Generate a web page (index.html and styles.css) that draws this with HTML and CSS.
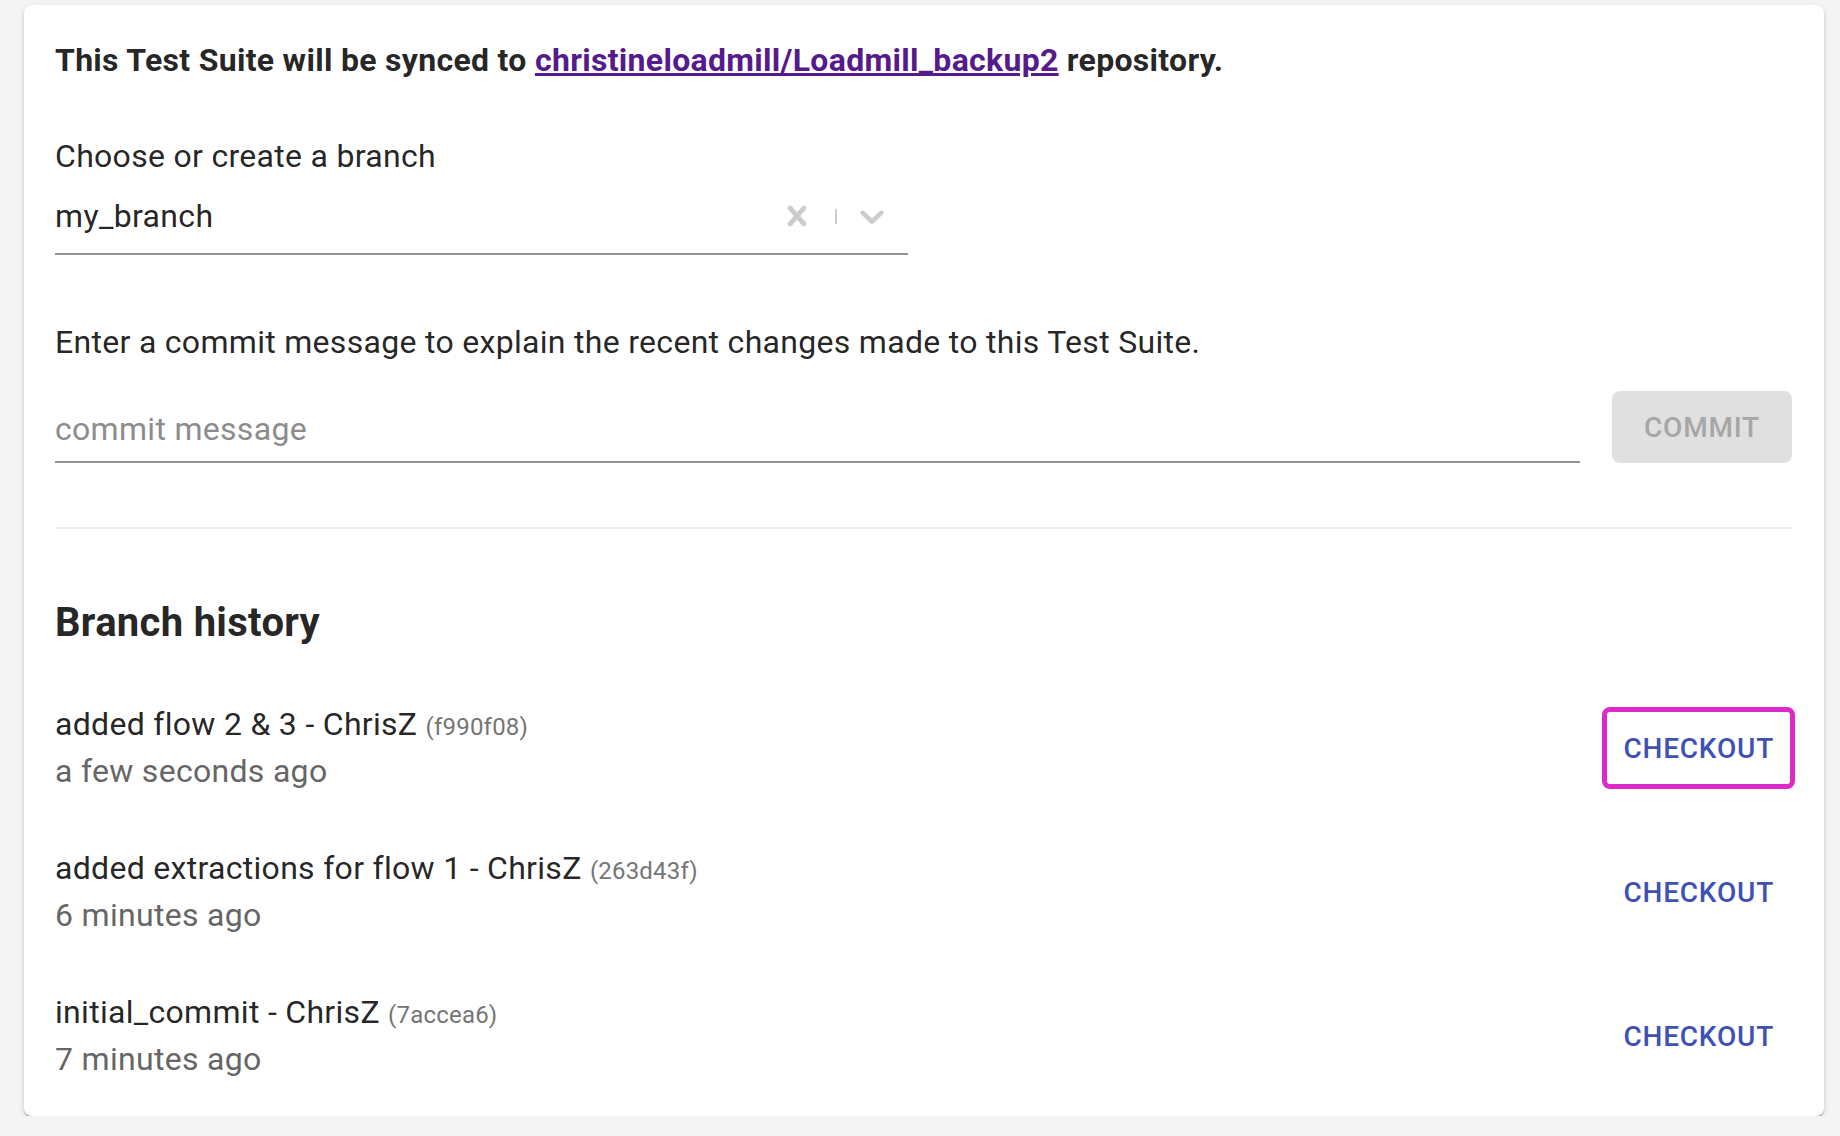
FILE: index.html
```html
<!DOCTYPE html>
<html lang="en">
<head>
<meta charset="utf-8">
<title>Git sync</title>
<link rel="stylesheet" href="styles.css">
</head>
<body>
<main class="card">
  <p class="sync-title">This Test Suite will be synced to <a class="repo-link" href="#">christineloadmill/Loadmill_backup2</a> repository.</p>

  <label class="field-label">Choose or create a branch</label>
  <div class="select">
    <span class="select-value">my_branch</span>
    <span class="select-indicators">
      <svg class="ind-icon" viewBox="0 0 20 20" aria-hidden="true"><path d="M14.348 14.849c-0.469 0.469-1.229 0.469-1.697 0l-2.651-3.030-2.651 3.029c-0.469 0.469-1.229 0.469-1.697 0-0.469-0.469-0.469-1.229 0-1.697l2.758-3.15-2.759-3.152c-0.469-0.469-0.469-1.228 0-1.697s1.228-0.469 1.697 0l2.652 3.031 2.651-3.031c0.469-0.469 1.228-0.469 1.697 0s0.469 1.229 0 1.697l-2.758 3.152 2.758 3.15c0.469 0.469 0.469 1.229 0 1.698z"/></svg>
      <span class="ind-sep"></span>
      <svg class="ind-icon" viewBox="0 0 20 20" aria-hidden="true"><path d="M4.516 7.548c0.436-0.446 1.043-0.481 1.576 0l3.908 3.747 3.908-3.747c0.533-0.481 1.141-0.446 1.574 0 0.436 0.445 0.408 1.197 0 1.615-0.406 0.418-4.695 4.502-4.695 4.502-0.217 0.223-0.502 0.335-0.787 0.335s-0.57-0.112-0.789-0.335c0 0-4.287-4.084-4.695-4.502s-0.436-1.17 0-1.615z"/></svg>
    </span>
  </div>

  <p class="commit-help">Enter a commit message to explain the recent changes made to this Test Suite.</p>
  <div class="commit-row">
    <div class="commit-input"><span class="placeholder">commit message</span></div>
    <button class="btn-commit" disabled>COMMIT</button>
  </div>

  <hr class="divider">

  <h2 class="history-title">Branch history</h2>
  <ul class="history">
    <li class="history-item">
      <div class="history-text">
        <div class="commit-title">added flow 2 &amp; 3 - ChrisZ <span class="hash">(f990f08)</span></div>
        <div class="commit-time">a few seconds ago</div>
      </div>
      <button class="btn-checkout highlighted">CHECKOUT</button>
    </li>
    <li class="history-item">
      <div class="history-text">
        <div class="commit-title">added extractions for flow 1 - ChrisZ <span class="hash">(263d43f)</span></div>
        <div class="commit-time">6 minutes ago</div>
      </div>
      <button class="btn-checkout">CHECKOUT</button>
    </li>
    <li class="history-item">
      <div class="history-text">
        <div class="commit-title">initial_commit - ChrisZ <span class="hash">(7accea6)</span></div>
        <div class="commit-time">7 minutes ago</div>
      </div>
      <button class="btn-checkout">CHECKOUT</button>
    </li>
  </ul>
</main>
</body>
</html>
```

FILE: styles.css
```css
* { box-sizing: border-box; }

html, body {
  margin: 0;
  padding: 0;
  background: #f4f4f4;
}

body {
  font-family: Roboto, "Liberation Sans", Arial, sans-serif;
  color: rgba(0, 0, 0, 0.87);
  padding: 5px 16px 0 24px;
}

.card {
  width: 1800px;
  background: #fff;
  border-radius: 8px;
  box-shadow: 0 4px 2px -2px rgba(0,0,0,0.2), 0 2px 2px 0 rgba(0,0,0,0.14), 0 2px 6px 0 rgba(0,0,0,0.12);
  padding: 35px 32px 8px 31px;
}

.sync-title {
  margin: 0;
  font-size: 32px;
  line-height: 40px;
  font-weight: 700;
  letter-spacing: 0.3px;
}

.repo-link {
  color: #551a8b;
  text-decoration: underline;
  text-decoration-thickness: 3px;
  text-underline-offset: 2px;
}

.field-label {
  display: block;
  margin-top: 56px;
  font-size: 32px;
  line-height: 40px;
  letter-spacing: 0.3px;
}

.select {
  margin-top: 20px;
  width: 853px;
  display: flex;
  align-items: center;
  padding-bottom: 17px;
  border-bottom: 2px solid #939393;
}

.select-value {
  flex: 1;
  font-size: 32px;
  line-height: 40px;
  letter-spacing: 0.35px;
}

.select-indicators {
  display: flex;
  align-items: center;
  padding-right: 16px;
}

.ind-icon {
  width: 40px;
  height: 40px;
  fill: #cccccc;
  display: block;
}

.ind-sep {
  width: 2px;
  height: 15px;
  background: #cccccc;
  margin: 0 15px 0 18px;
}

.commit-help {
  margin: 67px 0 0;
  font-size: 32px;
  line-height: 40px;
  letter-spacing: 0.3px;
}

.commit-row {
  margin-top: 29px;
  display: flex;
  align-items: flex-end;
  gap: 32px;
}

.commit-input {
  flex: 1;
  font-size: 32px;
  line-height: 40px;
  letter-spacing: 0.3px;
  padding-bottom: 12px;
  border-bottom: 2px solid #939393;
}

.placeholder {
  color: #8c8c8c;
}

.btn-commit {
  width: 180px;
  height: 72px;
  border: none;
  border-radius: 8px;
  background: #e0e0e0;
  color: #a6a6a6;
  font-family: Roboto, "Liberation Sans", Arial, sans-serif;
  font-size: 28px;
  font-weight: 500;
  letter-spacing: 0.8px;
  padding: 0 32px;
}

.divider {
  margin: 64px 0 0;
  border: none;
  height: 2px;
  background: #ededed;
}

.history-title {
  margin: 70px 0 0;
  font-size: 40px;
  line-height: 48px;
  font-weight: 700;
  letter-spacing: 0.3px;
}

.history {
  list-style: none;
  margin: 29px 0 0;
  padding: 0;
}

.history-item {
  display: flex;
  align-items: center;
  padding: 25px 0;
}

.history-text {
  flex: 1;
}

.commit-title {
  font-size: 32px;
  line-height: 47px;
  height: 47px;
  letter-spacing: 0.3px;
}

.hash {
  font-size: 24px;
  line-height: 1;
  letter-spacing: 0.2px;
  color: #757575;
}

.commit-time {
  font-size: 32px;
  line-height: 47px;
  letter-spacing: 0.3px;
  color: #666666;
}

.btn-checkout {
  height: 72px;
  padding: 0 16px;
  margin: 0 2px 0 0;
  border: none;
  border-radius: 8px;
  background: transparent;
  color: #3f51b5;
  font-family: Roboto, "Liberation Sans", Arial, sans-serif;
  font-size: 28px;
  font-weight: 500;
  letter-spacing: 0.8px;
}

.btn-checkout.highlighted {
  outline: 5px solid #dc29c8;
  outline-offset: 0;
  border-radius: 3px;
}
```
